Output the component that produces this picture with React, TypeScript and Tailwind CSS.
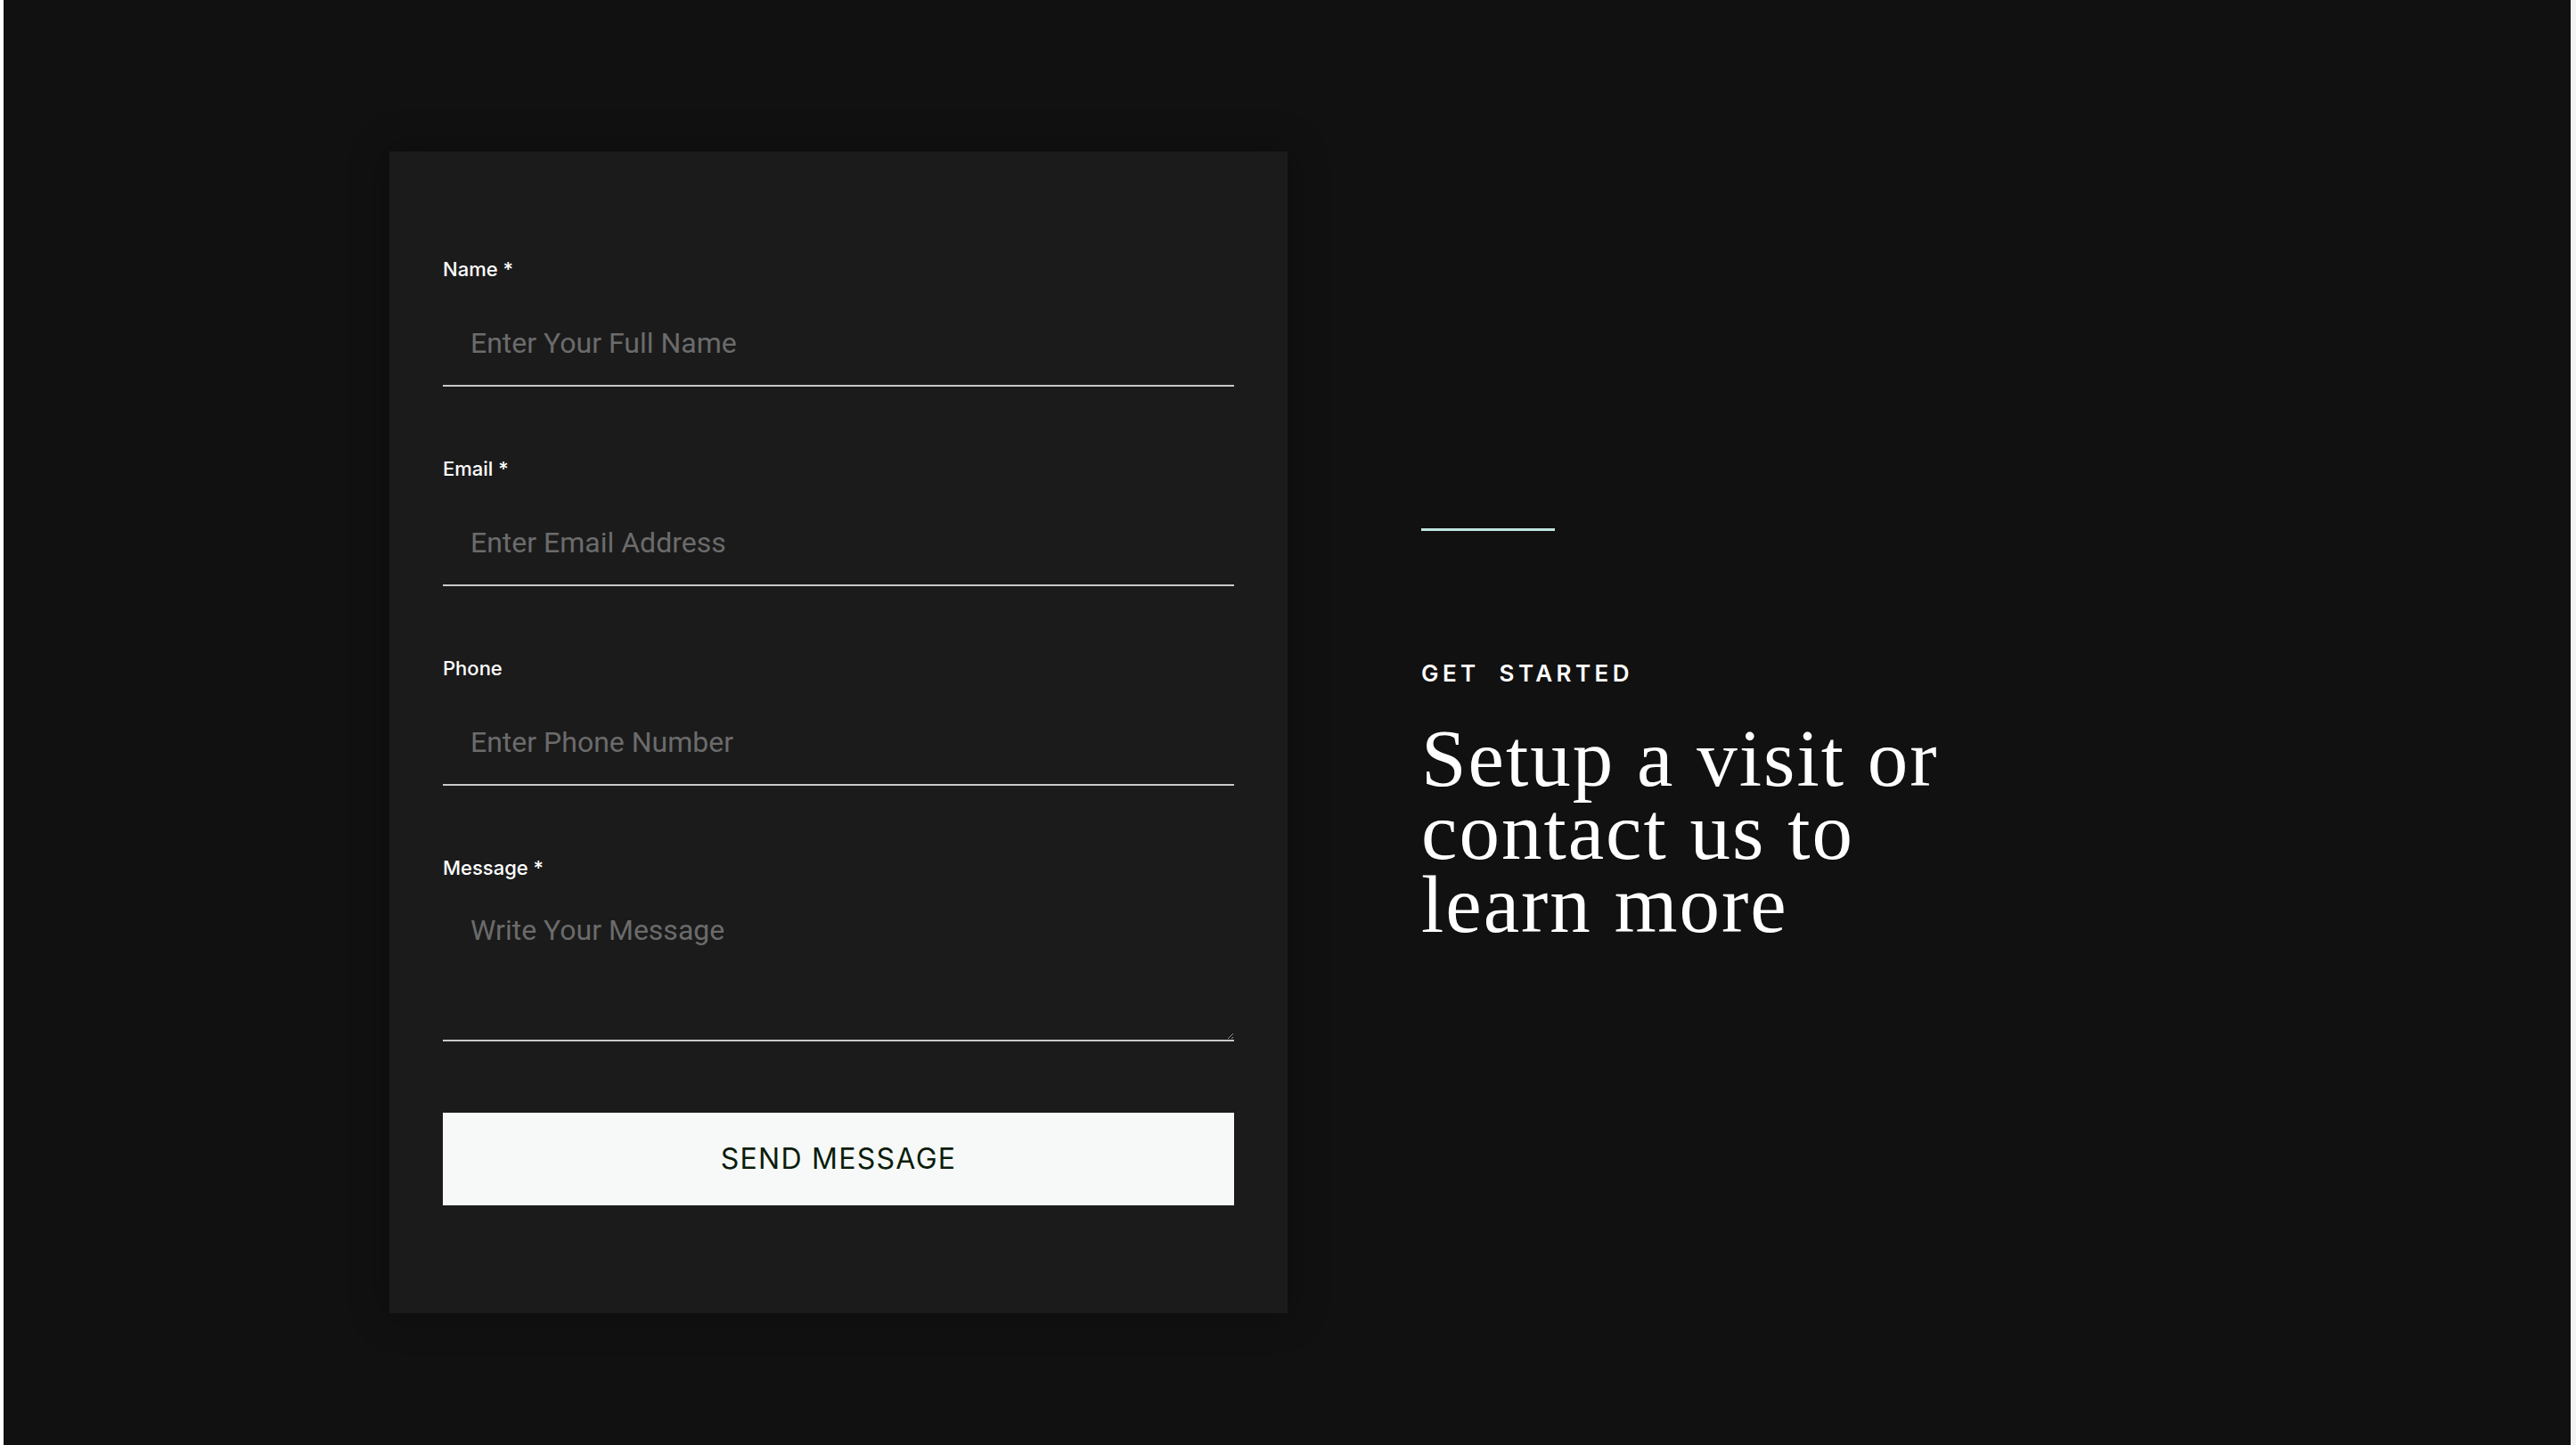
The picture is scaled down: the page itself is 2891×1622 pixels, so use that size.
import React from "react";

function Field({ label, required, placeholder }: { label: string; required?: boolean; placeholder: string }) {
  return (
    <div className="flex flex-col">
      <label className="block text-[22px] leading-none font-medium text-white">
        {label}
        {required ? <span> *</span> : null}
      </label>
      <input
        type="text"
        placeholder={placeholder}
        className="mt-[25px] h-[96px] w-full bg-transparent border-0 border-b-2 border-[#c9c9c9] pl-[31px] text-[32px] text-white placeholder:text-[#6b6b6b] outline-none font-['Roboto',sans-serif]"
      />
    </div>
  );
}

export default function App() {
  return (
    <div className="min-h-[1622px] w-full bg-[#111111] border-l-[4px] border-l-white border-r-[6px] border-r-[#f4f4f4] font-['Inter',sans-serif]">
      <div className="flex items-center pl-[433px] pt-[170px] pb-[147px]">
        <div className="w-[1008px] shrink-0 bg-[#1b1b1b] px-[60px] pt-[121px] pb-[121px] shadow-[0_0_40px_rgba(0,0,0,0.35)]">
          <div className="flex flex-col gap-[81px]">
            <Field label="Name" required placeholder="Enter Your Full Name" />
            <Field label="Email" required placeholder="Enter Email Address" />
            <Field label="Phone" placeholder="Enter Phone Number" />
            <div className="flex flex-col">
              <label className="block text-[22px] leading-none font-medium text-white">
                Message<span> *</span>
              </label>
              <textarea
                placeholder="Write Your Message"
                className="mt-[25px] h-[159px] w-full bg-transparent border-0 border-b-2 border-[#c9c9c9] pl-[31px] pt-[10px] text-[32px] leading-[48px] text-white placeholder:text-[#6b6b6b] outline-none font-['Roboto',sans-serif]"
              />
            </div>
          </div>
          <button className="mt-[80px] flex h-[104px] w-full items-center justify-center bg-[#f7f9f8] text-[32px] leading-none tracking-[0.04em] text-[#0b1d0b]">
            SEND MESSAGE
          </button>
        </div>
        <div className="ml-[150px] flex flex-col pt-[6px]">
          <div className="h-[3px] w-[150px] bg-[#bfe4e0]" />
          <div className="mt-[147px] text-[26px] leading-none font-semibold tracking-[0.17em] text-white">
            GET&nbsp; STARTED
          </div>
          <h1 className="mt-[42px] font-['Liberation_Serif',serif] text-[91px] leading-[82px] tracking-[0.022em] text-white">
            <span className="block">Setup a visit or</span>
            <span className="block">contact us to</span>
            <span className="block">learn more</span>
          </h1>
        </div>
      </div>
    </div>
  );
}
